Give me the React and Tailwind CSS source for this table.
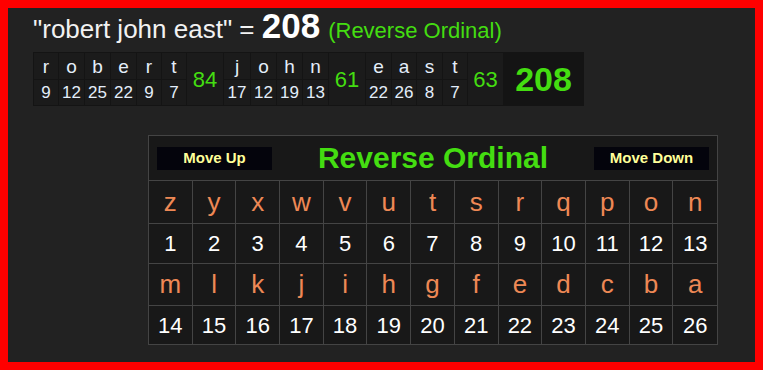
import React from "react";

const words = [
  { letters: ["r", "o", "b", "e", "r", "t"], nums: [9, 12, 25, 22, 9, 7], w: [25, 26, 26, 26, 25, 25], sum: 84, sw: 37 },
  { letters: ["j", "o", "h", "n"], nums: [17, 12, 19, 13], w: [27, 26, 26, 26], sum: 61, sw: 37 },
  { letters: ["e", "a", "s", "t"], nums: [22, 26, 8, 7], w: [26, 25, 26, 25], sum: 63, sw: 36 },
];

const row1 = "zyxwvutsrqpon".split("");
const row2 = "mlkjihgfedcba".split("");

export default function App() {
  return (
    <div
      className="w-[763px] h-[370px] bg-[#ff0000] p-[8px]"
      style={{ fontFamily: '"Liberation Sans", Arial, sans-serif' }}
    >
      <div className="w-full h-full bg-[#222222] pl-[25px]">
        <div className="flex items-baseline h-[44px] whitespace-nowrap leading-none">
          <span className="text-[26px] text-[#f2f2f2]">"robert john east" =&nbsp;</span>
          <span className="text-[35px] font-bold text-white">208</span>
          <span className="text-[22px] text-[#44dd11] ml-[8px]">(Reverse Ordinal)</span>
        </div>
        <table className="border-collapse bg-[#1b1b1b] table-fixed w-[550px]">
          <colgroup>
            {words.map((w, wi) => (
              <React.Fragment key={wi}>
                {w.w.map((cw, i) => (
                  <col key={i} style={{ width: cw }} />
                ))}
                <col style={{ width: w.sw }} />
              </React.Fragment>
            ))}
            <col style={{ width: 80 }} />
          </colgroup>
          <tbody>
            <tr>
              {words.map((w, wi) => (
                <React.Fragment key={wi}>
                  {w.letters.map((l, i) => (
                    <td
                      key={i}
                      className="border border-[#141414] h-[27px] p-0 text-center text-[19px] leading-none text-[#e4eefa]"
                    >
                      {l}
                    </td>
                  ))}
                  <td
                    rowSpan={2}
                    className="border border-[#141414] p-0 text-center text-[22px] text-[#44dd11]"
                  >
                    {w.sum}
                  </td>
                </React.Fragment>
              ))}
              <td
                rowSpan={2}
                className="border border-[#141414] bg-[#141414] p-0 text-center text-[34px] font-bold text-[#44dd11]"
              >
                208
              </td>
            </tr>
            <tr>
              {words.map((w, wi) => (
                <React.Fragment key={wi}>
                  {w.nums.map((n, i) => (
                    <td
                      key={i}
                      className="border border-[#141414] h-[26px] p-0 text-center text-[17px] leading-none text-[#e4eefa] whitespace-nowrap"
                    >
                      {n}
                    </td>
                  ))}
                </React.Fragment>
              ))}
            </tr>
          </tbody>
        </table>
        <div className="ml-[115px] mt-[29px] w-[570px] border border-[#444444] bg-[#181818]">
          <div className="h-[44px] flex items-center justify-between px-[8px]">
            <div className="w-[115px] h-[23px] bg-[#04040c] flex items-center justify-center text-[15px] font-bold text-[#ffff99]">
              Move Up
            </div>
            <div className="text-[30px] font-bold text-[#44dd11] leading-none">Reverse Ordinal</div>
            <div className="w-[115px] h-[23px] bg-[#04040c] flex items-center justify-center text-[15px] font-bold text-[#ffff99]">
              Move Down
            </div>
          </div>
          <div className="grid grid-cols-13 border-t border-[#444444]">
            {row1.map((l, i) => (
              <div
                key={"a" + i}
                className={`h-[43px] flex items-center justify-center text-[26px] text-[#ee8855] border-b border-[#444444] ${i < 12 ? "border-r" : ""}`}
              >
                {l}
              </div>
            ))}
            {row1.map((l, i) => (
              <div
                key={"b" + i}
                className={`h-[40px] flex items-center justify-center text-[22px] text-white border-b border-[#444444] ${i < 12 ? "border-r" : ""}`}
              >
                {i + 1}
              </div>
            ))}
            {row2.map((l, i) => (
              <div
                key={"c" + i}
                className={`h-[42px] flex items-center justify-center text-[26px] text-[#ee8855] border-b border-[#444444] ${i < 12 ? "border-r" : ""}`}
              >
                {l}
              </div>
            ))}
            {row2.map((l, i) => (
              <div
                key={"d" + i}
                className={`h-[38px] flex items-center justify-center text-[22px] text-white border-[#444444] ${i < 12 ? "border-r" : ""}`}
              >
                {i + 14}
              </div>
            ))}
          </div>
        </div>
      </div>
    </div>
  );
}
